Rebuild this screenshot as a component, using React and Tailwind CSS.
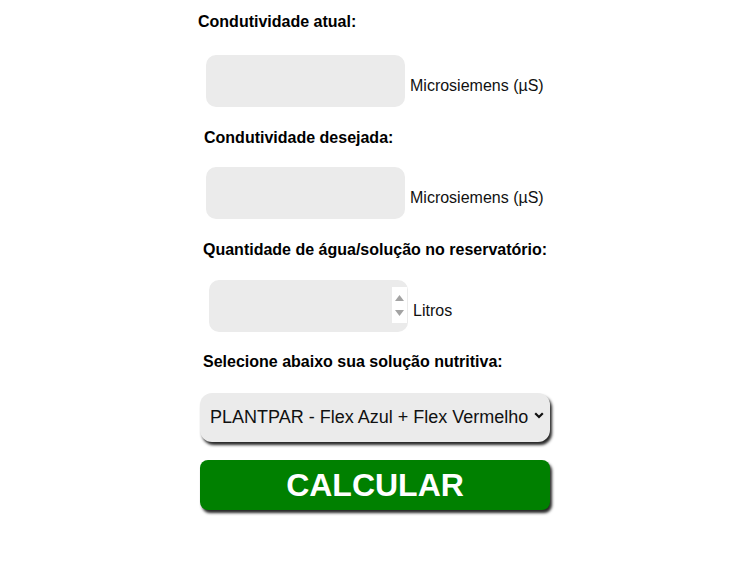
import { useState } from 'react'

const FONT = { fontFamily: '"Liberation Sans", Arial, sans-serif' }

function Label({ children, className = '' }) {
  return (
    <div className={`text-[16px] font-bold text-black leading-[18px] ${className}`}>{children}</div>
  )
}

function Field({ unit, className = '', spinner = false }) {
  const [value, setValue] = useState('')
  return (
    <div className={`flex items-center ${className}`}>
      <div className="relative w-[199px] h-[52px] rounded-[10px] bg-[#ebebeb]">
        <input
          value={value}
          onChange={(e) => setValue(e.target.value)}
          className="w-full h-full bg-transparent rounded-[10px] px-3 outline-none text-[16px]"
        />
        {spinner && (
          <div className="absolute right-[1px] top-[7px] w-[15px] h-[36px] bg-white flex flex-col items-center justify-center gap-[9px]">
            <svg width="9" height="6" viewBox="0 0 9 6"><path d="M4.5 0 L9 6 L0 6 Z" fill="#a3a3a3" /></svg>
            <svg width="9" height="6" viewBox="0 0 9 6"><path d="M0 0 L9 0 L4.5 6 Z" fill="#a3a3a3" /></svg>
          </div>
        )}
      </div>
      <span className="ml-[5px] mt-[10px] text-[16px] text-[#111]">{unit}</span>
    </div>
  )
}

export default function App() {
  return (
    <div className="min-h-screen bg-white text-black" style={FONT}>
      <div className="ml-[198px] w-[352px] pt-[13px] flex flex-col">
        <Label>Condutividade atual:</Label>
        <Field unit="Microsiemens (µS)" className="ml-[8px] mt-[24px]" />

        <Label className="ml-[6px] mt-[22px]">Condutividade desejada:</Label>
        <Field unit="Microsiemens (µS)" className="ml-[8px] mt-[20px]" />

        <Label className="ml-[5px] mt-[22px]">Quantidade de água/solução no reservatório:</Label>
        <Field unit="Litros" spinner className="ml-[11px] mt-[21px]" />

        <Label className="ml-[5px] mt-[21px]">Selecione abaixo sua solução nutritiva:</Label>

        <div className="ml-[2px] mt-[22px] relative w-[350px] h-[49px] rounded-[12px] bg-[#ebebeb] shadow-[2px_3px_3px_rgba(0,0,0,0.85)]">
          <select className="appearance-none w-full h-full bg-transparent rounded-[12px] pl-[10px] pr-[16px] text-[18px] text-[#111] outline-none">
            <option>PLANTPAR - Flex Azul + Flex Vermelho</option>
          </select>
          <svg className="absolute right-[6px] top-[19px] pointer-events-none" width="10" height="7" viewBox="0 0 10 7">
            <path d="M1.2 1.2 L5 5 L8.8 1.2" fill="none" stroke="#111" strokeWidth="2.2" />
          </svg>
        </div>

        <button className="ml-[2px] mt-[18px] w-[350px] h-[50px] rounded-[8px] bg-[#008000] text-white text-[32px] font-bold leading-none shadow-[2px_3px_3px_rgba(0,0,0,0.85)]">
          CALCULAR
        </button>
      </div>
    </div>
  )
}
